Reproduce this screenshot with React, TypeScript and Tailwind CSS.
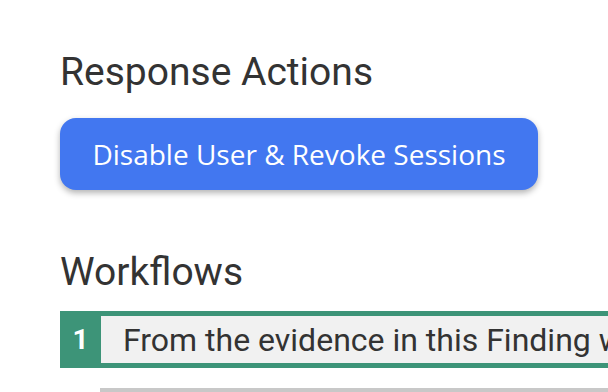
import React from "react";

export default function App() {
  return (
    <div className="w-[608px] h-[392px] overflow-hidden bg-white pl-[60px] pt-[48px]" style={{ fontFamily: "Roboto, sans-serif" }}>
      <h2 className="text-[39px] leading-[48px] text-[#333333] font-normal">Response Actions</h2>
      <button
        className="mt-[22px] w-[478px] h-[72px] rounded-[16px] bg-[#4277f0] text-white text-[28px] shadow-[0_3px_6px_rgba(0,0,0,0.3)] flex items-center justify-center"
        style={{ fontFamily: "'Open Sans', sans-serif" }}
      >
        Disable User &amp; Revoke Sessions
      </button>
      <h2 className="mt-[58px] text-[39px] leading-[48px] text-[#333333] font-normal">Workflows</h2>
      <div className="mt-[15px] flex h-[57px] w-[600px] bg-[#3d9478] py-[5px] pr-[5px]">
        <div className="w-[41px] flex items-center justify-center text-white text-[28px] font-bold">1</div>
        <div className="flex-1 min-w-0 bg-[#f1f1f1] flex items-center pl-[22px] text-[32px] text-[#333333] whitespace-nowrap overflow-hidden">
          From the evidence in this Finding we
        </div>
      </div>
      <div className="mt-[20px] ml-[40px] h-[40px] border-t-[5px] border-[#c8c8c8]"></div>
    </div>
  );
}
